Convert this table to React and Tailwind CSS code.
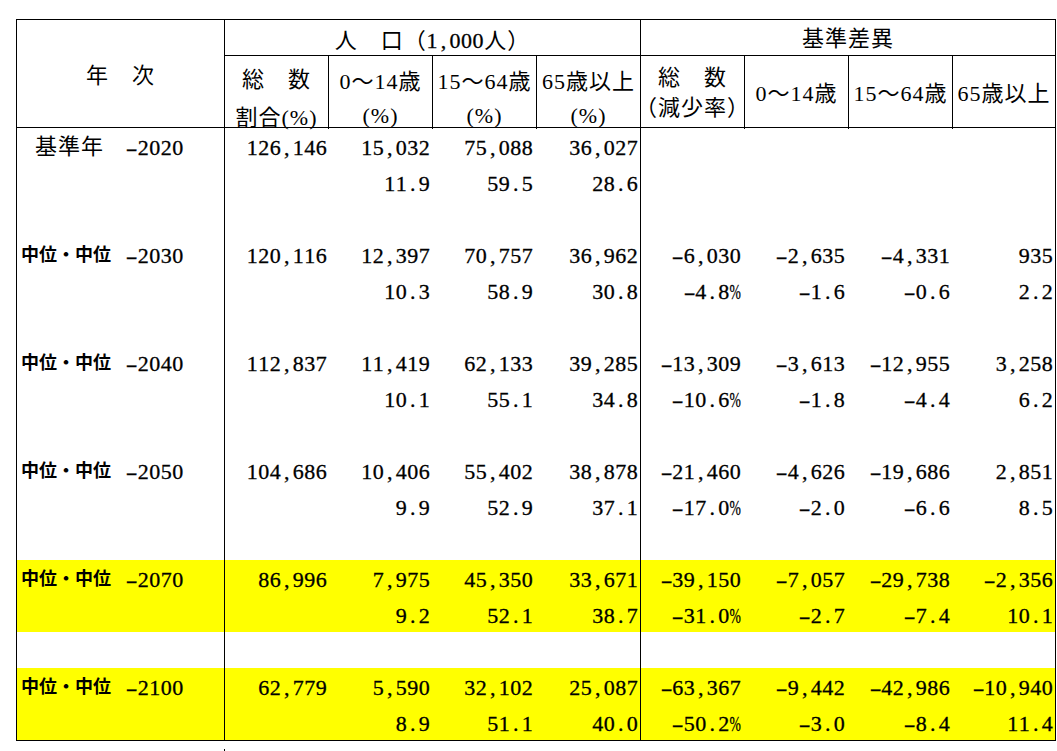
import React from "react";

const FONT = "font-['Liberation_Serif','Noto_Sans_CJK_JP',serif]";

function Num({ v }) {
  return (
    <span className="inline-flex [-webkit-text-stroke:0.3px_black]">
      {Array.from(v).map((c, i) => (
        <span key={i} className="inline-flex w-[11.5px] justify-center">
          <span
            className={
              c === "-"
                ? "inline-block scale-x-[1.6]"
                : c === "%"
                ? "inline-block scale-x-[0.62]"
                : "inline-block"
            }
          >
            {c}
          </span>
        </span>
      ))}
    </span>
  );
}

const groups = [
  {
    label: "基準年",
    base: true,
    year: "-2020",
    a: ["126,146", "15,032", "75,088", "36,027", "", "", "", ""],
    b: ["", "11.9", "59.5", "28.6", "", "", "", ""],
  },
  {
    label: "中位・中位",
    year: "-2030",
    a: ["120,116", "12,397", "70,757", "36,962", "-6,030", "-2,635", "-4,331", "935"],
    b: ["", "10.3", "58.9", "30.8", "-4.8%", "-1.6", "-0.6", "2.2"],
  },
  {
    label: "中位・中位",
    year: "-2040",
    a: ["112,837", "11,419", "62,133", "39,285", "-13,309", "-3,613", "-12,955", "3,258"],
    b: ["", "10.1", "55.1", "34.8", "-10.6%", "-1.8", "-4.4", "6.2"],
  },
  {
    label: "中位・中位",
    year: "-2050",
    a: ["104,686", "10,406", "55,402", "38,878", "-21,460", "-4,626", "-19,686", "2,851"],
    b: ["", "9.9", "52.9", "37.1", "-17.0%", "-2.0", "-6.6", "8.5"],
  },
  {
    label: "中位・中位",
    year: "-2070",
    yellow: true,
    a: ["86,996", "7,975", "45,350", "33,671", "-39,150", "-7,057", "-29,738", "-2,356"],
    b: ["", "9.2", "52.1", "38.7", "-31.0%", "-2.7", "-7.4", "10.1"],
  },
  {
    label: "中位・中位",
    year: "-2100",
    yellow: true,
    last: true,
    a: ["62,779", "5,590", "32,102", "25,087", "-63,367", "-9,442", "-42,986", "-10,940"],
    b: ["", "8.9", "51.1", "40.0", "-50.2%", "-3.0", "-8.4", "11.4"],
  },
];

const cellCls = [
  "flex w-[104px] shrink-0 items-center justify-end pt-[4px] pr-[2px]",
  "flex w-[104px] shrink-0 items-center justify-end pt-[4px] pr-[3px]",
  "flex w-[104px] shrink-0 items-center justify-end pt-[4px] pr-[4px]",
  "flex w-[104px] shrink-0 items-center justify-end border-r border-black pt-[4px] pr-[2px]",
  "flex w-[104px] shrink-0 items-center justify-end pt-[4px] pr-[4px]",
  "flex w-[104px] shrink-0 items-center justify-end pt-[4px] pr-[4px]",
  "flex w-[104px] shrink-0 items-center justify-end pt-[4px] pr-[3px]",
  "flex flex-1 items-center justify-end pt-[4px] pr-[2px]",
];

function Line({ left, vals, yellow }) {
  return (
    <div className={yellow ? "flex h-[36px] bg-[#ffff00]" : "flex h-[36px]"}>
      <div className="flex w-[208px] shrink-0 border-r border-black">{left}</div>
      {vals.map((v, i) => (
        <div key={i} className={cellCls[i]}>
          {v ? <Num v={v} /> : null}
        </div>
      ))}
    </div>
  );
}

function LeftLabel({ g }) {
  return (
    <>
      <div className="flex w-[109px] shrink-0 items-center">
        {g.base ? (
          <span className="pl-[18px] pt-[2px] text-[22px] tracking-[1px]">{g.label}</span>
        ) : (
          <span className="pl-[4px] pb-[2px] font-['Noto_Sans_CJK_JP',sans-serif] text-[18px] font-bold">
            {g.label}
          </span>
        )}
      </div>
      <div className="flex items-center pt-[4px]">
        <Num v={g.year} />
      </div>
    </>
  );
}

function SubHead2({ l1, l2, pt, gap }) {
  return (
    <div className={`flex w-[104px] shrink-0 flex-col items-center border-r border-black ${pt} ${gap}`}>
      <div className="h-[22px] whitespace-nowrap">{l1}</div>
      <div className="h-[22px] whitespace-nowrap">{l2}</div>
    </div>
  );
}

export default function App() {
  return (
    <div className={`min-h-screen bg-white pt-[19px] pl-[16px] text-black leading-none ${FONT}`}>
      <div className="w-[1040px] border border-black">
        {/* header */}
        <div className="flex h-[108px] border-b border-black text-[22px] tracking-[1px]">
          <div className="flex w-[208px] shrink-0 items-center justify-center border-r border-black pt-[5px]">
            年　次
          </div>
          <div className="flex flex-1 flex-col">
            <div className="flex h-[36px] shrink-0 border-b border-black">
              <div className="flex w-[416px] shrink-0 items-center justify-center border-r border-black pt-[6px]">
                人　口（<Num v="1,000" />人）
              </div>
              <div className="flex flex-1 items-center justify-center pt-[2px]">基準差異</div>
            </div>
            <div className="flex flex-1">
              <SubHead2 l1="総　数" l2="割合(%)" pt="pt-[13px]" gap="gap-[16px]" />
              <SubHead2 l1="0～14歳" l2="(%)" pt="pt-[15px]" gap="gap-[12px]" />
              <SubHead2 l1="15～64歳" l2="(%)" pt="pt-[15px]" gap="gap-[12px]" />
              <SubHead2 l1="65歳以上" l2="(%)" pt="pt-[15px]" gap="gap-[12px]" />
              <SubHead2 l1="総　数" l2="（減少率）" pt="pt-[11px]" gap="gap-[8px]" />
              <div className="flex w-[104px] shrink-0 items-center justify-center border-r border-black pt-[2px] whitespace-nowrap">
                0～14歳
              </div>
              <div className="flex w-[104px] shrink-0 items-center justify-center border-r border-black pt-[2px] whitespace-nowrap">
                15～64歳
              </div>
              <div className="flex flex-1 items-center justify-center pt-[2px] whitespace-nowrap">
                65歳以上
              </div>
            </div>
          </div>
        </div>
        {/* body */}
        <div className="flex flex-col text-[22px]">
          {groups.map((g, gi) => (
            <div key={gi} className="flex flex-col">
              <Line left={<LeftLabel g={g} />} vals={g.a} yellow={g.yellow} />
              <Line left={null} vals={g.b} yellow={g.yellow} />
              {!g.last && <Line left={null} vals={["", "", "", "", "", "", "", ""]} />}
            </div>
          ))}
        </div>
      </div>
      <div className="ml-[208px] mt-[8px] h-[2px] w-px bg-black" />
    </div>
  );
}
